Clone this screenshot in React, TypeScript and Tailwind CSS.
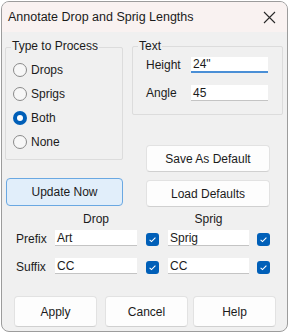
import React from "react";

const font = { fontFamily: '"Liberation Sans", Arial, sans-serif' };

function Radio({ label, checked }: { label: string; checked?: boolean }) {
  return (
    <div className="flex items-center h-[24px] pl-[7px]">
      {checked ? (
        <div className="w-[14px] h-[14px] rounded-full bg-[#005fb8] flex items-center justify-center">
          <div className="w-[6px] h-[6px] rounded-full bg-white" />
        </div>
      ) : (
        <div className="w-[14px] h-[14px] rounded-full border border-[#8a8a8a] bg-[#f7f7f7]" />
      )}
      <span className="ml-[4px] text-[12px] leading-[14px] text-[#1b1b1b]">{label}</span>
    </div>
  );
}

function Check() {
  return (
    <div className="w-[13px] h-[13px] rounded-[3px] bg-[#005fb8] flex items-center justify-center mt-[3px] shrink-0">
      <svg width="9" height="9" viewBox="0 0 9 9">
        <path d="M1.6 4.8 L3.5 6.6 L7.4 2.6" stroke="white" strokeWidth="1.1" fill="none" />
      </svg>
    </div>
  );
}

function Input({ value, w, focused }: { value: string; w: string; focused?: boolean }) {
  return (
    <div
      className={`${w} h-[16px] bg-white flex items-center pl-[2px] text-[12px] text-[#1b1b1b] shrink-0 ${
        focused ? "border-b-2 border-[#4a8fd6]" : "border-b border-[#c4c4c4]"
      }`}
    >
      {value}
    </div>
  );
}

function Btn({ label, cls }: { label: string; cls: string }) {
  return (
    <div
      className={`${cls} flex items-center justify-center rounded-[4px] border bg-[#fdfdfd] border-[#e2e2e2] border-b-[#d0d0d0] text-[12px] text-[#1b1b1b] shrink-0`}
    >
      {label}
    </div>
  );
}

export default function App() {
  return (
    <div className="w-[288px] h-[333px] bg-white pt-[1px] pl-[1px]" style={font}>
      <div className="w-[287px] h-[331px] border border-[#9c9c9c] rounded-[8px] overflow-hidden bg-[#f0f0f0] flex flex-col">
        {/* title bar */}
        <div className="h-[30px] bg-[#f9f2f1] flex items-center pl-[6px] shrink-0">
          <span className="text-[12.5px] text-[#1b1b1b]">Annotate Drop and Sprig Lengths</span>
          <svg className="ml-auto mr-[11px]" width="13" height="13" viewBox="0 0 13 13">
            <path d="M1 1 L12 12 M12 1 L1 12" stroke="#2a2a2a" strokeWidth="1.1" />
          </svg>
        </div>

        {/* body */}
        <div className="flex flex-col pt-[14px]">
          <div className="flex items-start">
            {/* left column */}
            <div className="ml-[3px] mt-[1px] w-[118px] flex flex-col">
              <div className="border border-[#dcdcdc] rounded-[2px] flex flex-col pb-[5px]">
                <span className="-mt-[9px] ml-[5px] px-[1px] self-start bg-[#f0f0f0] text-[12px] leading-[14px] text-[#1b1b1b]">
                  Type to Process
                </span>
                <div className="mt-[5px] flex flex-col">
                  <Radio label="Drops" />
                  <Radio label="Sprigs" />
                  <Radio label="Both" checked />
                  <Radio label="None" />
                </div>
              </div>
              <div className="mt-[18px] ml-[1px] w-[117px] h-[28px] rounded-[4px] border border-[#6aa8e2] bg-[#e1eefa] flex items-center justify-center text-[12px] text-[#1b1b1b]">
                Update Now
              </div>
            </div>

            {/* right column */}
            <div className="ml-[9px] w-[151px] flex flex-col">
              <div className="border border-[#dcdcdc] rounded-[2px] flex flex-col pb-[12px]">
                <span className="-mt-[8px] ml-[5px] px-[1px] self-start bg-[#f0f0f0] text-[12px] leading-[14px] text-[#1b1b1b]">
                  Text
                </span>
                <div className="mt-[3px] h-[18px] flex items-center pl-[13px]">
                  <span className="w-[45px] text-[12px] text-[#1b1b1b]">Height</span>
                  <Input value={'24"'} w="w-[77px]" focused />
                </div>
                <div className="mt-[10px] h-[18px] flex items-center pl-[13px]">
                  <span className="w-[45px] text-[12px] text-[#1b1b1b]">Angle</span>
                  <Input value="45" w="w-[77px]" />
                </div>
              </div>
              <Btn label="Save As Default" cls="mt-[30px] ml-[14px] w-[124px] h-[27px]" />
              <Btn label="Load Defaults" cls="mt-[8px] ml-[14px] w-[124px] h-[27px]" />
            </div>
          </div>

          {/* headers */}
          <div className="mt-[5px] flex pl-[14px] h-[14px] text-[12px] leading-[14px] text-[#1b1b1b]">
            <span className="w-[39px]" />
            <span className="w-[82px] text-center">Drop</span>
            <span className="w-[31px]" />
            <span className="w-[81px] text-center">Sprig</span>
          </div>

          {/* prefix */}
          <div className="mt-[4px] flex items-start pl-[14px] h-[18px]">
            <span className="w-[39px] mt-[2px] text-[12px] leading-[14px] text-[#1b1b1b]">Prefix</span>
            <Input value="Art" w="w-[82px]" />
            <div className="ml-[9px]"><Check /></div>
            <div className="ml-[9px]"><Input value="Sprig" w="w-[81px]" /></div>
            <div className="ml-[8px]"><Check /></div>
          </div>

          {/* suffix */}
          <div className="mt-[10px] flex items-start pl-[14px] h-[18px]">
            <span className="w-[39px] mt-[2px] text-[12px] leading-[14px] text-[#1b1b1b]">Suffix</span>
            <Input value="CC" w="w-[82px]" />
            <div className="ml-[9px]"><Check /></div>
            <div className="ml-[9px]"><Input value="CC" w="w-[81px]" /></div>
            <div className="ml-[8px]"><Check /></div>
          </div>

          {/* bottom buttons */}
          <div className="mt-[20px] flex pl-[12px]">
            <Btn label="Apply" cls="w-[83px] h-[31px]" />
            <Btn label="Cancel" cls="ml-[8px] w-[83px] h-[31px]" />
            <Btn label="Help" cls="ml-[5px] w-[83px] h-[31px]" />
          </div>
        </div>
      </div>
    </div>
  );
}
